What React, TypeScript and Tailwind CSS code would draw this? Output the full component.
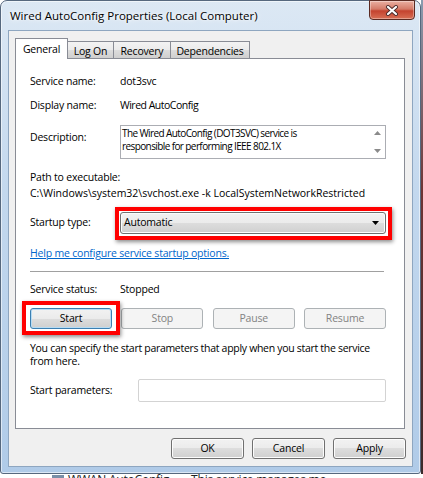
import React from "react";

const grad =
  "border border-[#707070] bg-[linear-gradient(#f2f2f2_0%,#ebebeb_50%,#dddddd_50%,#cfcfcf_100%)] shadow-[inset_0_0_0_1px_#fcfcfc]";
const btnOff =
  "h-[21px] w-[82px] rounded-[3px] border border-[#adb2b5] bg-[#f4f4f4] flex items-center justify-center text-[#838383]";
const tabOff =
  "-ml-px h-[18px] border border-[#898c95] bg-[linear-gradient(#f3f3f3,#ebebeb_50%,#dddddd_50%,#cfcfcf)] flex justify-center pt-px leading-[16px]";

function Row({ label, value, tight }: { label: string; value: string; tight?: boolean }) {
  return (
    <div className="flex items-center h-[16px]">
      <span className="w-[90px]">{label}</span>
      <span className={tight ? "tracking-[-0.5px]" : ""}>{value}</span>
    </div>
  );
}

export default function App() {
  return (
    <div className="w-[423px] h-[478px] overflow-hidden bg-white text-[10.5px] tracking-[-0.2px] text-black font-['Open_Sans','Noto_Sans',sans-serif]">
      <div className="flex">
        {/* window */}
        <div className="w-[421px] h-[474px] flex flex-col px-[7px] pb-[6px] rounded-t-[7px] rounded-b-[3px] border border-[#56687e] bg-[linear-gradient(#dce8f4,#c3d8ee_40%,#b0cbe8)] shadow-[inset_0_0_0_1px_rgba(255,255,255,0.55)]">
          <div className="h-[29px] flex items-start">
            <span className="pl-[2px] pt-[7px] leading-[16px] text-[11.5px] tracking-normal [text-shadow:0_0_6px_#fff,0_0_3px_#fff]">
              Wired AutoConfig Properties (Local Computer)
            </span>
            <div className="ml-auto -mr-[2px] -mt-px w-[46px] h-[20px] rounded-b-[4px] border border-[#5a2a22] bg-[linear-gradient(#eab0a2,#d47a68_45%,#c4432f_55%,#d86f55)] shadow-[inset_0_0_0_1px_rgba(255,255,255,0.35)] flex items-center justify-center">
              <svg width="14" height="11" viewBox="0 0 14 11">
                <path d="M3 2 L11 9 M11 2 L3 9" stroke="#4a2b2b" strokeWidth="4" strokeLinecap="round" />
                <path d="M3 2 L11 9 M11 2 L3 9" stroke="#fff" strokeWidth="2.2" strokeLinecap="round" />
              </svg>
            </div>
          </div>

          {/* client area */}
          <div className="w-[405px] h-[437px] border border-[#8ea6c0] bg-[#f0f0f0] flex flex-col pl-[6px] pr-[6px] pt-[7px]">
            <div className="flex items-end h-[21px]">
              <div className="relative z-10 w-[53px] h-[21px] border border-b-0 border-[#898c95] bg-white flex justify-center pt-[2px] leading-[16px]">
                General
              </div>
              <div className={tabOff + " w-[47px]"}>Log On</div>
              <div className={tabOff + " w-[58px]"}>Recovery</div>
              <div className={tabOff + " w-[80px]"}>Dependencies</div>
            </div>

            {/* tab panel */}
            <div className="-mt-px w-[390px] h-[371px] border border-[#898c95] bg-white flex flex-col pl-[14px] pr-[18px]">
              <div className="mt-[15px]">
                <Row label="Service name:" value="dot3svc" />
              </div>
              <div className="mt-[8px]">
                <Row label="Display name:" value="Wired AutoConfig" tight />
              </div>

              <div className="mt-[11px] flex h-[34px]">
                <span className="w-[90px] pt-[4px] leading-[16px]">Description:</span>
                <div className="flex-1 flex border border-[#abadb3]">
                  <div className="flex-1 flex flex-col pl-[1px] pt-px whitespace-nowrap text-[10px] tracking-[-0.6px]">
                    <span className="h-[13px] leading-[13px]">The Wired AutoConfig (DOT3SVC) service is</span>
                    <span className="h-[13px] leading-[13px]">responsible for performing IEEE 802.1X</span>
                  </div>
                  <div className="w-[16px] flex flex-col items-center justify-between py-[5px]">
                    <svg width="7" height="4" viewBox="0 0 7 4">
                      <path d="M0 4 L3.5 0 L7 4 Z" fill="#8a8a8a" />
                    </svg>
                    <svg width="7" height="4" viewBox="0 0 7 4">
                      <path d="M0 0 L7 0 L3.5 4 Z" fill="#8a8a8a" />
                    </svg>
                  </div>
                </div>
              </div>

              <div className="mt-[11px] h-[16px] flex items-center">Path to executable:</div>
              <div className="h-[16px] flex items-center whitespace-nowrap tracking-normal">
                C:\Windows\system32\svchost.exe -k LocalSystemNetworkRestricted
              </div>

              <div className="mt-[10px] flex items-center h-[22px]">
                <span className="w-[90px]">Startup type:</span>
                <div className="relative flex-1 h-[22px]">
                  <div className={grad + " h-[22px] rounded-[3px] flex items-center justify-between pl-[3px] pr-[6px]"}>
                    <span>Automatic</span>
                    <svg width="7" height="4" viewBox="0 0 7 4">
                      <path d="M0 0 L7 0 L3.5 4 Z" fill="#000" />
                    </svg>
                  </div>
                  <div className="absolute -left-[5px] -top-[5px] -right-[6px] -bottom-[6px] border-[4px] border-[#ff0000] shadow-[1px_2px_4px_rgba(0,0,0,0.45)]" />
                </div>
              </div>

              <div className="mt-[12px] h-[16px] flex items-center">
                <span className="text-[#0066cc] underline">Help me configure service startup options.</span>
              </div>

              <div className="mt-[9px] h-px w-[354px] bg-[#a0a0a0]" />

              <div className="mt-[10px]">
                <Row label="Service status:" value="Stopped" />
              </div>

              <div className="mt-[10px] flex justify-between">
                <div className="relative">
                  <div className="h-[21px] w-[82px] rounded-[3px] border border-[#3c7fb1] bg-[linear-gradient(#f2f2f2_0%,#ebebeb_50%,#dddddd_50%,#cfcfcf_100%)] shadow-[inset_0_0_0_1px_#b7dcf4] flex items-center justify-center">
                    Start
                  </div>
                  <div className="absolute -left-[8px] -top-[7px] -right-[8px] -bottom-[6px] border-[4px] border-[#ff0000] shadow-[1px_2px_4px_rgba(0,0,0,0.45)]" />
                </div>
                <div className={btnOff}>Stop</div>
                <div className={btnOff}>Pause</div>
                <div className={btnOff}>Resume</div>
              </div>

              <div className="mt-[13px] flex flex-col whitespace-nowrap">
                <span className="h-[13px] leading-[13px] tracking-[-0.3px]">
                  You can specify the start parameters that apply when you start the service
                </span>
                <span className="h-[13px] leading-[13px]">from here.</span>
              </div>

              <div className="mt-[11px] flex items-center h-[23px]">
                <span className="w-[108px]">Start parameters:</span>
                <div className="flex-1 h-[23px] border border-[#d3d3d3] rounded-[2px] bg-white" />
              </div>
            </div>

            <div className="mt-[9px] flex justify-end gap-[8px]">
              <div className={grad + " w-[73px] h-[21px] rounded-[3px] flex items-center justify-center"}>OK</div>
              <div className={grad + " w-[73px] h-[21px] rounded-[3px] flex items-center justify-center"}>Cancel</div>
              <div className={grad + " w-[73px] h-[21px] rounded-[3px] flex items-center justify-center"}>Apply</div>
            </div>
          </div>
        </div>
        <div className="w-[2px] h-[474px] bg-[linear-gradient(#8a9cb0,#6e3434_40%,#3a2a2a)]" />
      </div>
      <div className="h-[4px] overflow-hidden flex text-[12px] leading-[12px] text-[#222] pl-[52px]">
        <span className="w-[12px] h-[3px] bg-[#7a8fa8] mt-[1px]" />
        <span className="ml-[4px]">WWAN AutoConfig</span>
        <span className="ml-[22px]">This service manages mo</span>
      </div>
    </div>
  );
}
